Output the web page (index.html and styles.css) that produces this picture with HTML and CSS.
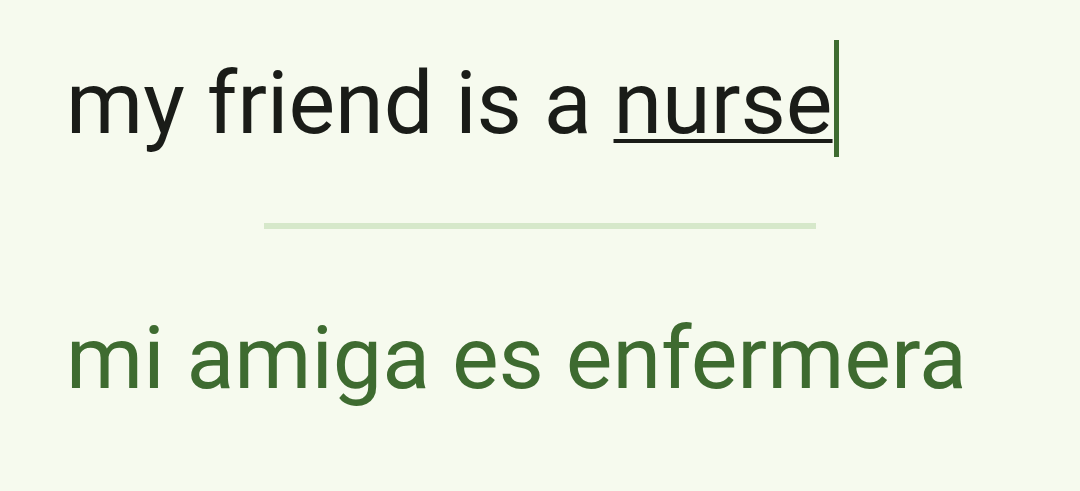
FILE: index.html
```html
<!DOCTYPE html>
<html lang="en">
<head>
<meta charset="utf-8">
<title>Translate</title>
<link rel="stylesheet" href="styles.css">
</head>
<body>
<main class="translator">
  <div class="source">my friend is a <span class="word">nurse</span><span class="cursor"></span></div>
  <div class="divider"></div>
  <div class="target">mi amiga es enfermera</div>
</main>
</body>
</html>
```
FILE: styles.css
```css
html, body {
  margin: 0;
  padding: 0;
  background: #f6faee;
  height: 100%;
}
.translator {
  display: flex;
  flex-direction: column;
  padding: 40px 0 0 66px;
  font-family: Roboto, "Noto Sans", sans-serif;
}
.source {
  font-size: 88px;
  line-height: 120px;
  color: #1a1c18;
  white-space: nowrap;
}
.word {
  text-decoration: underline;
  text-decoration-thickness: 4px;
  text-underline-offset: 6px;
  text-decoration-color: #1a1c18;
}
.cursor {
  display: inline-block;
  width: 5px;
  height: 117px;
  background: #3e6b30;
  vertical-align: -24px;
  margin-left: 1px;
}
.divider {
  align-self: flex-start;
  margin: 60px 0 0 198px;
  width: 552px;
  height: 6px;
  background: #d6e8ca;
}
.target {
  margin-top: 69px;
  font-size: 88px;
  line-height: 120px;
  color: #3e6b30;
  white-space: nowrap;
}
```
